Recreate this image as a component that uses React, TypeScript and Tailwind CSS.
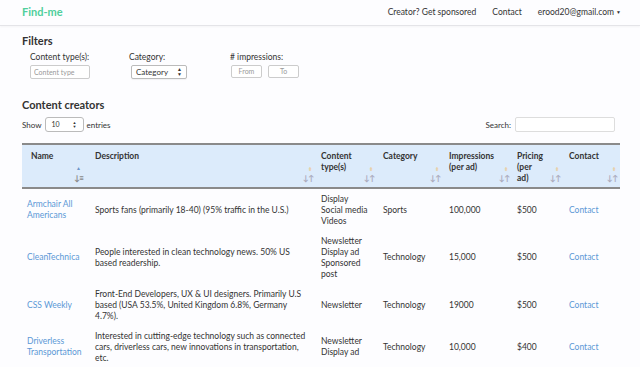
import React from 'react';

interface Creator {
  name: string;
  description: string;
  types: string[];
  category: string;
  impressions: string;
  pricing: string;
}

const creators: Creator[] = [
  {
    name: 'Armchair All Americans',
    description: 'Sports fans (primarily 18-40) (95% traffic in the U.S.)',
    types: ['Display', 'Social media', 'Videos'],
    category: 'Sports',
    impressions: '100,000',
    pricing: '$500',
  },
  {
    name: 'CleanTechnica',
    description: 'People interested in clean technology news. 50% US based readership.',
    types: ['Newsletter', 'Display ad', 'Sponsored post'],
    category: 'Technology',
    impressions: '15,000',
    pricing: '$500',
  },
  {
    name: 'CSS Weekly',
    description:
      'Front-End Developers, UX & UI designers. Primarily U.S based (USA 53.5%, United Kingdom 6.8%, Germany 4.7%).',
    types: ['Newsletter'],
    category: 'Technology',
    impressions: '19000',
    pricing: '$500',
  },
  {
    name: 'Driverless Transportation',
    description:
      'Interested in cutting-edge technology such as connected cars, driverless cars, new innovations in transportation, etc.',
    types: ['Newsletter', 'Display ad'],
    category: 'Technology',
    impressions: '10,000',
    pricing: '$400',
  },
];

const columns = [
  { label: 'Name', width: 'w-[68px]', pad: 'pl-[9px] pr-[14px]', active: true },
  { label: 'Description', width: 'w-[226px]', pad: 'pl-[5px] pr-[14px]' },
  { label: 'Content type(s)', width: 'w-[61px]', pad: 'pl-[5px] pr-[14px]' },
  { label: 'Category', width: 'w-[66px]', pad: 'pl-[6px] pr-[14px]' },
  { label: 'Impressions (per ad)', width: 'w-[69px]', pad: 'pl-[6px] pr-[12px]' },
  { label: 'Pricing (per ad)', width: 'w-[51px]', pad: 'pl-[5px] pr-[20px]' },
  { label: 'Contact', width: 'w-[57px]', pad: 'pl-[6px] pr-[14px]' },
];

const App: React.FC = () => {
  return (
    <div className="min-h-[367px] bg-[#fdfdff] text-[#333] font-['Lato',sans-serif] text-[8.5px]">
      {/* Navbar */}
      <nav className="h-[26px] flex items-center justify-between pl-[22px] pr-[19px] border-b border-[#e4e4e8] shadow-[0_1px_2px_rgba(0,0,0,0.04)]">
        <span className="text-[#4fcf9c] font-bold text-[11px]">Find-me</span>
        <div className="flex items-center gap-[16px] text-[8.5px] text-[#333]">
          <span>Creator? Get sponsored</span>
          <span>Contact</span>
          <span className="flex items-center gap-[2px]">
            erood20@gmail.com
            <span className="text-[5px]">▼</span>
          </span>
        </div>
      </nav>

      <div className="px-[22px]">
        {/* Filters */}
        <h2 className="font-bold text-[11px] mt-[8px] leading-[14px]">Filters</h2>
        <div className="flex pl-[8px] mt-[3px]">
          <div className="w-[99px]">
            <div className="leading-[12px]">Content type(s):</div>
            <input
              placeholder="Content type"
              className="mt-[2px] w-[60px] h-[14px] border border-[#ccc] rounded-[2px] px-[3px] text-[7px] placeholder:text-[#999] bg-white"
            />
          </div>
          <div className="w-[101px]">
            <div className="leading-[12px]">Category:</div>
            <div className="mt-[2px] ml-[2px] w-[56px] h-[14px] border border-[#bbb] rounded-[2px] px-[4px] text-[8px] flex items-center justify-between bg-white shadow-[0_1px_1px_rgba(0,0,0,0.05)]">
              <span>Category</span>
              <span className="text-[5px] leading-[5px] flex flex-col">
                <span>▲</span>
                <span>▼</span>
              </span>
            </div>
          </div>
          <div>
            <div className="leading-[12px]">&#35; impressions:</div>
            <div className="mt-[2px] ml-[1px] flex gap-[6px]">
              <div className="w-[31px] h-[13px] border border-[#ccc] rounded-[2px] text-[7px] text-[#999] flex items-center justify-center bg-white">
                From
              </div>
              <div className="w-[31px] h-[13px] border border-[#ccc] rounded-[2px] text-[7px] text-[#999] flex items-center justify-center bg-white">
                To
              </div>
            </div>
          </div>
        </div>

        {/* Content creators */}
        <h2 className="font-bold text-[11px] mt-[19px] leading-[14px]">Content creators</h2>
        <div className="flex items-center justify-between mt-[5px]">
          <div className="flex items-center gap-[3px] text-[8px]">
            <span>Show</span>
            <div className="w-[39px] h-[15px] border border-[#bbb] rounded-[3px] px-[6px] flex items-center justify-between bg-white text-[7px]">
              <span>10</span>
              <span className="text-[4px] leading-[4px] flex flex-col">
                <span>▲</span>
                <span>▼</span>
              </span>
            </div>
            <span>entries</span>
          </div>
          <div className="flex items-center gap-[4px] text-[8px] mr-[3px]">
            <span>Search:</span>
            <div className="w-[100px] h-[15px] border border-[#ddd] rounded-[2px] bg-white" />
          </div>
        </div>

        {/* Table */}
        <table className="mt-[11px] w-[598px] table-fixed border-collapse">
          <colgroup>
            {columns.map((c) => (
              <col key={c.label} className={c.width} />
            ))}
          </colgroup>
          <thead>
            <tr className="bg-[#dcebfb] border-t-2 border-b-2 border-[#8a8a8a]">
              {columns.map((c) => (
                <th
                  key={c.label}
                  className={`relative h-[44px] align-top text-left font-bold text-[8.5px] leading-[11px] pt-[6px] ${c.pad}`}
                >
                  {c.label}
                  <span
                    className={
                      c.active
                        ? 'absolute right-[9px] top-[18px] text-[5px] text-[#6d95c8]'
                        : 'absolute right-[4px] top-[19px] text-[5px] text-[#e8cfa8]'
                    }
                  >
                    {c.active ? '▲' : '⬍'}
                  </span>
                  <span
                    className={
                      c.active
                        ? 'absolute right-[7px] bottom-[3px] text-[8px] text-[#888] tracking-[-1px]'
                        : 'absolute right-[3px] bottom-[3px] text-[8px] text-[#aab] tracking-[-1px]'
                    }
                  >
                    {c.active ? '↓≡' : '↓↑'}
                  </span>
                </th>
              ))}
            </tr>
          </thead>
          <tbody>
            {creators.map((r) => (
              <tr key={r.name}>
                <td className="pl-[5px] pr-[2px] py-[4.5px] align-middle leading-[11px] text-[#5b98d6]">
                  {r.name}
                </td>
                <td className="pl-[5px] pr-[6px] py-[4.5px] align-middle leading-[11px]">{r.description}</td>
                <td className="pl-[5px] py-[4.5px] align-middle leading-[11px]">
                  {r.types.map((t) => (
                    <div key={t}>{t}</div>
                  ))}
                </td>
                <td className="pl-[6px] py-[4.5px] align-middle leading-[11px]">{r.category}</td>
                <td className="pl-[6px] py-[4.5px] align-middle leading-[11px]">{r.impressions}</td>
                <td className="pl-[5px] py-[4.5px] align-middle leading-[11px]">{r.pricing}</td>
                <td className="pl-[6px] py-[4.5px] align-middle leading-[11px] text-[#5b98d6]">Contact</td>
              </tr>
            ))}
          </tbody>
        </table>
      </div>
    </div>
  );
};

export default App;
